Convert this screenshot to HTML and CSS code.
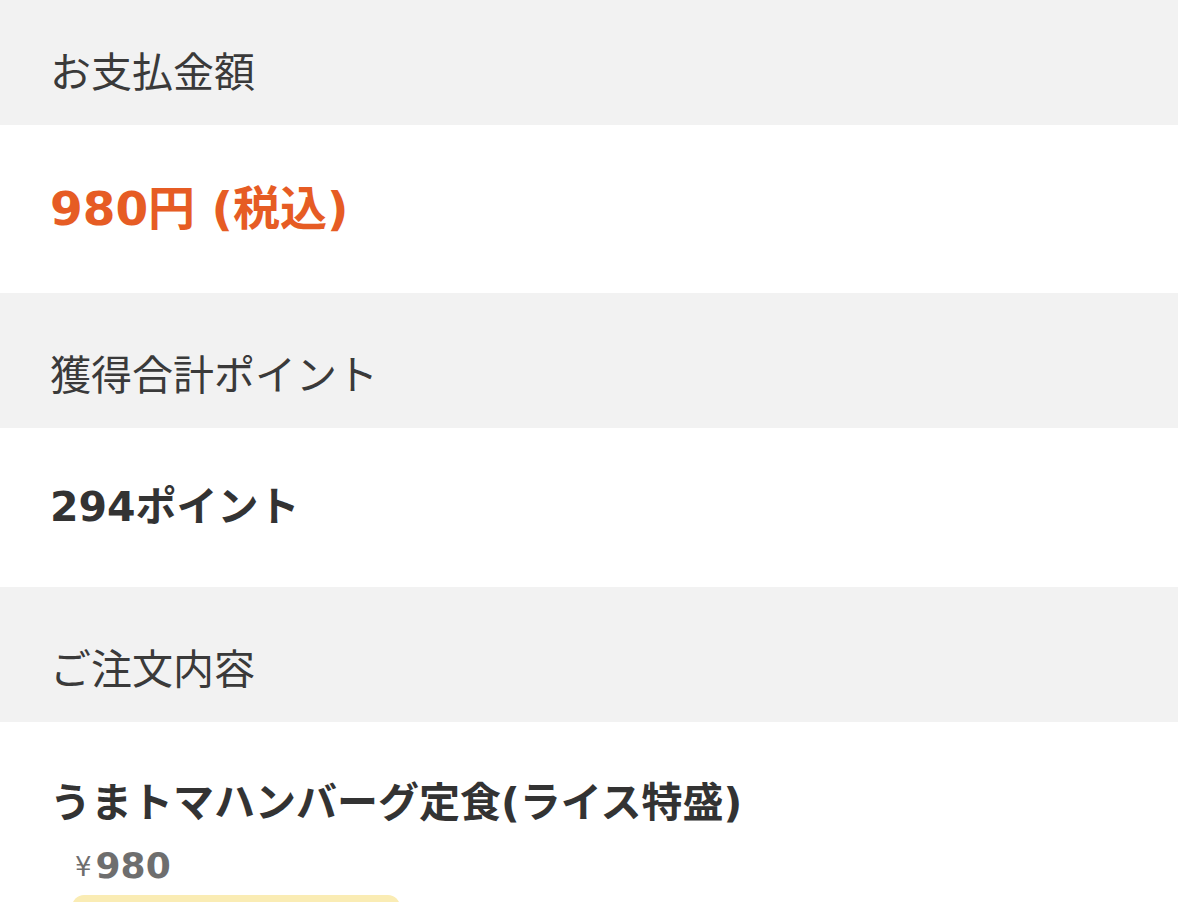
FILE: index.html
```html
<!DOCTYPE html>
<html lang="ja">
<head>
<meta charset="utf-8">
<link rel="stylesheet" href="styles.css">
</head>
<body>
<div class="page">
  <div class="sec-head first">お支払金額</div>
  <div class="sec-body price-body"><span class="price">980円 (税込)</span></div>
  <div class="sec-head">獲得合計ポイント</div>
  <div class="sec-body points-body"><span class="points">294ポイント</span></div>
  <div class="sec-head">ご注文内容</div>
  <div class="sec-body order-body">
    <div class="item-name">うまトマハンバーグ定食(ライス特盛)</div>
    <div class="item-price"><span class="yen">¥</span>980</div>
    <div class="item-tag"></div>
  </div>
</div>
</body>
</html>
```

FILE: styles.css
```css
html, body {
  margin: 0;
  padding: 0;
  background: #ffffff;
}
body {
  font-family: "DejaVu Sans", "Noto Sans CJK JP", sans-serif;
  color: #333333;
  overflow: hidden;
}
.page {
  width: 1178px;
  height: 902px;
  overflow: hidden;
}
.sec-head {
  background: #f2f2f2;
  padding: 48px 50px 24px;
  font-family: "Noto Sans CJK JP", sans-serif;
  font-size: 41px;
  line-height: 63px;
  font-weight: 400;
  color: #3a3a3a;
}
.sec-head.first {
  padding-top: 38px;
}
.sec-body {
  background: #ffffff;
  padding: 0 50px;
}
.price-body {
  padding-top: 50px;
  padding-bottom: 50px;
}
.price {
  display: block;
  font-size: 47px;
  line-height: 68px;
  font-weight: 700;
  color: #e65c24;
}
.points-body {
  padding-top: 48px;
  padding-bottom: 48px;
}
.points {
  display: block;
  font-size: 41px;
  line-height: 63px;
  font-weight: 700;
  color: #333333;
}
.order-body {
  padding-top: 50px;
}
.item-name {
  font-size: 41px;
  line-height: 62px;
  font-weight: 600;
  color: #333333;
}
.item-price {
  margin-left: 25px;
  margin-top: 10px;
  font-size: 36px;
  line-height: 44px;
  font-weight: 700;
  color: #6e6e6e;
}
.yen {
  font-size: 26px;
  font-weight: 400;
  margin-right: 4px;
  vertical-align: 2px;
}
.item-tag {
  margin-left: 22px;
  margin-top: 6px;
  width: 328px;
  height: 40px;
  border-radius: 12px;
  background: #faecb4;
}
```
